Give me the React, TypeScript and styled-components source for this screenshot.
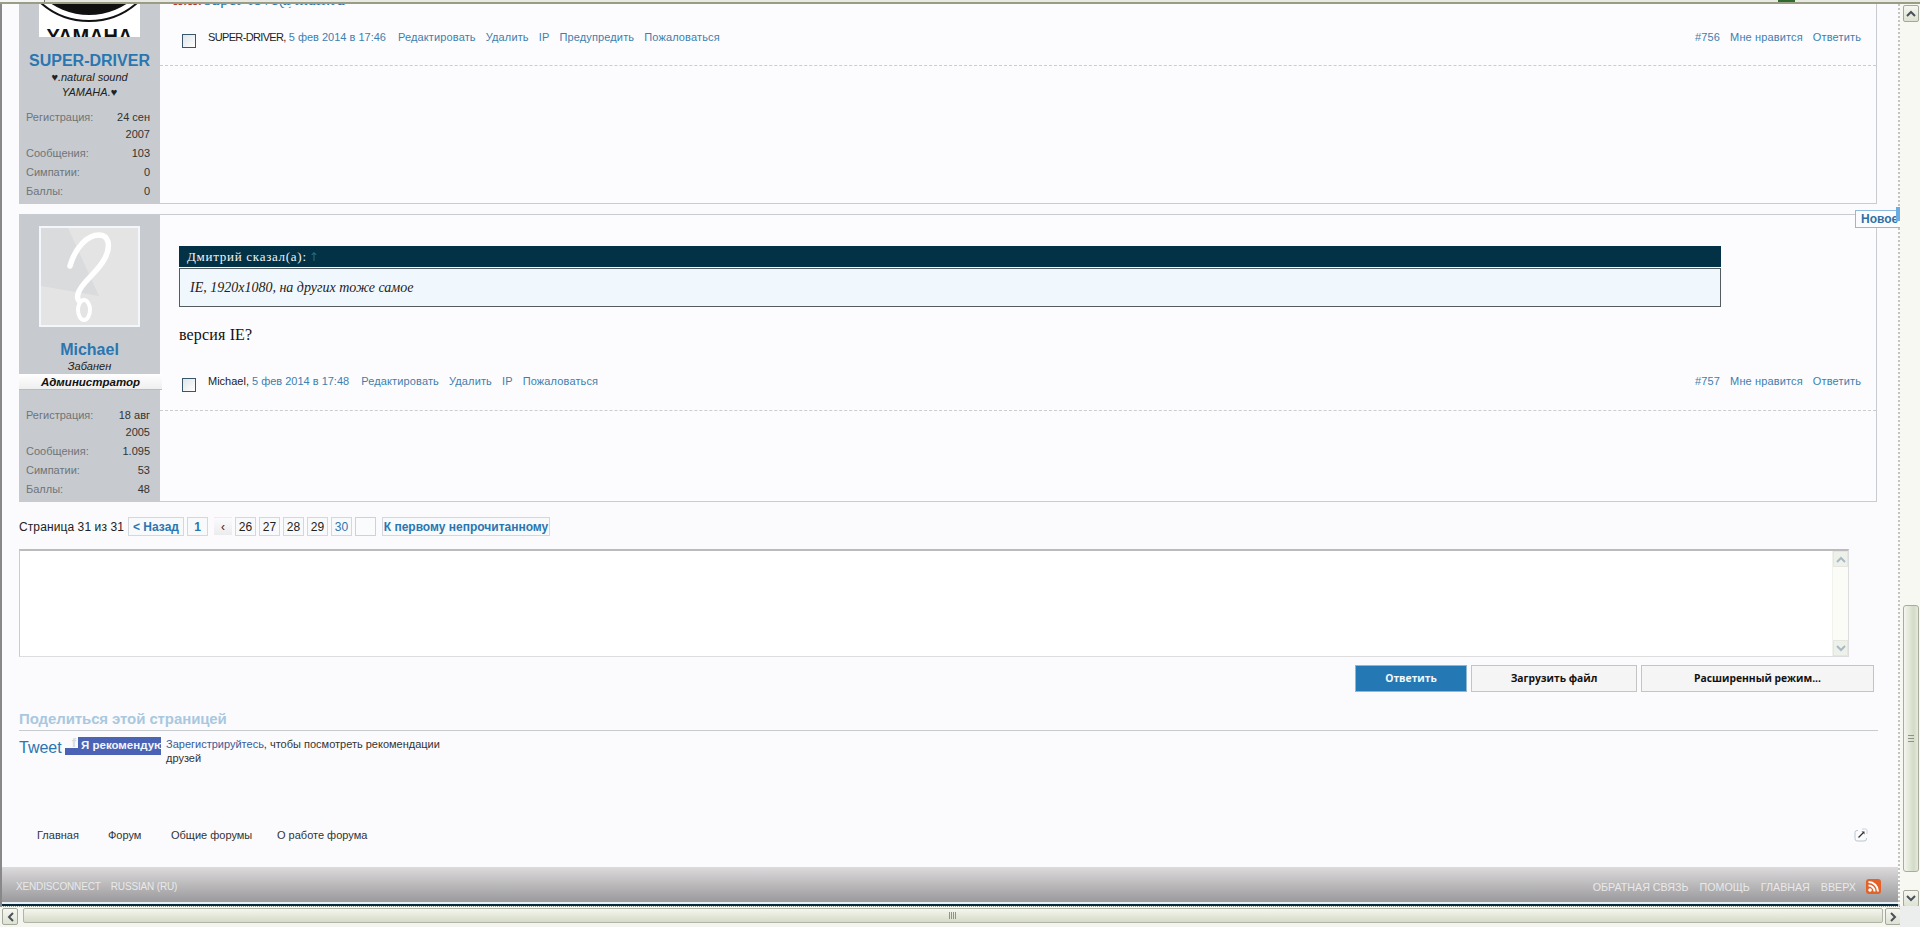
import React from "react";
import styled, { createGlobalStyle } from "styled-components";

const Global = createGlobalStyle`
  html, body { margin: 0; padding: 0; height: 927px; overflow: hidden; background: #fbfbfd; }
  * { box-sizing: border-box; }
  body { font-family: "Liberation Sans", Arial, sans-serif; font-size: 11px; color: #222; }
`;

const Win = styled.div`
  width: 1920px; height: 927px; display: grid;
  grid-template-columns: 1900px 20px; grid-template-rows: 4px 902px 21px;
  background: #fbfbfd; position: relative; overflow: hidden;
`;
const TopStrip = styled.div`
  grid-column: 1 / 3; background: #e9e9e3; border-bottom: 2px solid #9a9c84;
  display: flex;
`;
const TopTab = styled.div`
  width: 45px; height: 2px; background: #f4f5f7; border-right: 1px solid #777;
`;
const TopGreen = styled.div`
  width: 17px; height: 2px; margin-right: 125px; background: #2f6b2f;
`;
const Main = styled.div`
  overflow: hidden; border-left: 2px solid #888; display: flex; flex-direction: column; position: relative;
  border-right: 2px dotted #c4c4be;
`;
const Content = styled.div`
  padding: 0 21px 0 17px; display: flex; flex-direction: column; height: 858px; margin-top: -1px; flex: none;
`;
const Post = styled.article<{ $h: number; $clip?: boolean }>`
  display: grid; grid-template-columns: 141px 1fr; height: ${(p) => p.$h}px; flex: none;
  border: 1px solid #c8ccd0; border-left: 0; ${(p) => p.$clip && "border-top: 0;"}
  width: 1858px; background: #fcfcfe; margin-bottom: 10px;
`;
const Side = styled.aside<{ $pad: number }>`
  background: #c7cbcf; display: flex; flex-direction: column; align-items: center;
  padding-top: ${(p) => p.$pad}px; height: calc(100% + 1px); position: relative;
`;
const AvatarClip = styled.div`
  width: 101px; height: 34px; background: #fff; overflow: hidden; flex: none;
  position: relative; text-align: center;
`;
const YamahaMark = styled.svg`
  position: absolute; left: 0; top: 0; width: 101px; height: 34px;
`;
const YamahaText = styled.span`
  position: absolute; left: 0; right: 0; top: 23px; font: bold 20px/20px "Liberation Sans", sans-serif; color: #111;
`;
const AvatarBox = styled.svg`
  width: 101px; height: 101px; flex: none; display: block;
`;
const Name = styled.a<{ $mt: number }>`
  font: bold 16px/18px "Liberation Sans", sans-serif; color: #2a76b0; margin-top: ${(p) => p.$mt}px; text-align: center;
`;
const Motto = styled.div`
  font: italic 11px/15px "Liberation Sans", sans-serif; color: #222; text-align: center; width: 110px;
`;
const Role = styled.div`
  align-self: stretch; margin-right: -2px; height: 16px;
  background: linear-gradient(#ffffff, #efefef); border-bottom: 1px solid #bbb; position: relative; z-index: 1;
  font: italic bold 11.5px/16px "Liberation Sans", sans-serif; color: #111; text-align: center;
`;
const Stats = styled.dl<{ $mt: number }>`
  margin: ${(p) => p.$mt}px 0 0; width: 100%; padding: 0 10px 0 7px; display: grid;
  grid-template-columns: 1fr auto; row-gap: 2px; font: 11px/17px "Liberation Sans", sans-serif;
`;
const StatLabel = styled.dt`
  color: #6f7478;
`;
const StatValue = styled.dd`
  margin: 0; color: #333; text-align: right; max-width: 48px;
`;
const Body = styled.div`
  display: flex; flex-direction: column; min-width: 0;
`;
const Clipped = styled.div`
  height: 5px; margin: 0 0 0 13px; overflow: hidden; font: 17px/17px "Liberation Serif", serif; color: #2a76b0;
  display: flex; align-items: flex-end; white-space: nowrap; letter-spacing: 0.3px;
`;
const ClippedRed = styled.span`
  color: #b33a2b; font-weight: bold; margin-right: 2px;
`;
const Quote = styled.div`
  margin: 31px 0 0 19px; width: 1542px; flex: none;
`;
const QuoteHead = styled.div`
  height: 21px; background: #033145; color: #f2f5f7; padding-left: 8px;
  font: 13px/21px "Liberation Serif", serif; letter-spacing: 0.72px;
`;
const QuoteArrow = styled.span`
  color: #1f6a96; margin-left: 2px; font: 12px/21px "DejaVu Sans", sans-serif;
`;
const QuoteBody = styled.div`
  margin-top: 1px; height: 39px; border: 1px solid #555c60; background: #f1f8fd; padding-left: 10px;
  font: italic 14px/37px "Liberation Serif", serif; color: #222;
`;
const Msg = styled.p`
  margin: 19px 0 0 19px; font: 16px/18px "Liberation Serif", serif; color: #111; letter-spacing: 0.15px;
`;
const Meta = styled.div<{ $mt: number; $h: number }>`
  display: flex; align-items: flex-start; padding: 0 15px 0 22px; margin-top: ${(p) => p.$mt}px; height: ${(p) => p.$h}px; flex: none;
  font: 11px/14px "Liberation Sans", sans-serif;
`;
const Check = styled.span`
  width: 14px; height: 14px; flex: none; border: 1.5px solid #39566b; background: linear-gradient(135deg, #dfe5e8, #fff);
  margin: 4px 12px 0 0;
`;
const Author = styled.span<{ $squeeze: number }>`
  color: #222; margin-right: 3px; letter-spacing: ${(p) => p.$squeeze}px;
`;
const MetaLink = styled.a`
  color: #3d7fae; margin-left: 10px; white-space: nowrap; letter-spacing: 0.14px;
`;
const MetaDate = styled.a`
  color: #3d7fae; white-space: nowrap; margin-right: 2px;
`;
const Spacer = styled.span`
  flex: 1;
`;
const Dashed = styled.div`
  border-top: 1px dashed #c9cdd0; flex: none;
`;
const Pager = styled.nav`
  display: flex; align-items: flex-start; margin-top: 5px; height: 20px; font: 12px/18px "Liberation Sans", sans-serif; flex: none;
`;
const PagerLabel = styled.span`
  color: #222; width: 109px; letter-spacing: 0.1px; line-height: 20px;
`;
const PageBtn = styled.a<{ $w: number; $ml?: number; $dark?: boolean; $bold?: boolean; $ghost?: boolean }>`
  width: ${(p) => p.$w}px; height: 19px; margin-left: ${(p) => p.$ml ?? 3}px; flex: none; display: block; text-align: center;
  border: 1px solid ${(p) => (p.$ghost ? "transparent" : "#d2d8de")};
  background: ${(p) => (p.$ghost ? "linear-gradient(#fbfbfd, #ececee)" : "#f8f9fb")};
  color: ${(p) => (p.$dark ? "#222" : "#2a76b0")};
  font-weight: ${(p) => (p.$bold ? 700 : 400)};
  white-space: nowrap; overflow: hidden;
`;
const BlankPage = styled.span`
  width: 21px; height: 19px; margin-left: 3px; flex: none; border: 1px solid #bcd7ec; background: #f9fbfd;
`;
const Editor = styled.div`
  margin-top: 12px; width: 1830px; height: 108px; background: #fff; flex: none;
  border: 1px solid #ddd; border-top: 2px solid #bbb; border-left: 1px solid #ccc;
  display: flex; justify-content: flex-end;
`;
const EditorScroll = styled.div`
  width: 16px; height: 100%; background: #fbfcf8; display: flex; flex-direction: column; justify-content: space-between;
  border-left: 1px solid #f0f2ec;
`;
const EditorBtn = styled.div`
  height: 16px; background: #eef1ea; border: 1px solid #e4e7e0; color: #a9b9c4; display: flex; align-items: center; justify-content: center;
`;
const Actions = styled.div`
  display: flex; justify-content: flex-end; gap: 4px; margin-top: 8px; padding-right: 3px; flex: none;
`;
const Btn = styled.button<{ $w: number; $primary?: boolean }>`
  width: ${(p) => p.$w}px; height: 27px; padding: 0;
  border: 1px solid ${(p) => (p.$primary ? "#8fb6d3" : "#c4c4c4")};
  background: ${(p) => (p.$primary ? "#2478b4" : "#f5f5f5")};
  color: ${(p) => (p.$primary ? "#f3f8fb" : "#111")};
  font: bold 10.3px/25px "Open Sans", sans-serif;
`;
const ShareTitle = styled.h3`
  margin: 18px 0 0; font: bold 15px/18px "Liberation Sans", sans-serif; letter-spacing: -0.1px; color: #a9c8df; flex: none; padding-bottom: 2px;
  border-bottom: 1px solid #c8cbce; width: 1859px; height: 21px;
`;
const ShareRow = styled.div`
  display: flex; align-items: flex-start; margin-top: 6px; height: 34px; flex: none;
`;
const Tweet = styled.a`
  font: 16px/21px "Liberation Sans", sans-serif; color: #2a76b0; width: 46px;
`;
const Like = styled.div`
  width: 96px; height: 18px; flex: none; display: flex;
  background: linear-gradient(#fbfbfd 0 11px, #4a63b4 11px);
`;
const LikeF = styled.span`
  width: 13px; font: bold 13px/12px "Liberation Sans", sans-serif; color: #d9dce0; text-align: right; padding-right: 2px;
`;
const LikeText = styled.span`
  background: #4a63b4; color: #f4f6fb; flex: 1; overflow: hidden; white-space: nowrap; padding-left: 3px;
  font: bold 11.5px/16px "Liberation Sans", sans-serif;
`;
const ShareNote = styled.div`
  margin-left: 5px; width: 300px; font: 11px/14px "Liberation Sans", sans-serif; color: #333;
`;
const ShareLink = styled.a`
  color: #3a5a98;
`;
const Crumbs = styled.div`
  display: flex; align-items: center; margin-top: 47px; height: 34px; flex: none; padding-left: 18px;
  font: 11px/14px "Liberation Sans", sans-serif; color: #333;
`;
const Crumb = styled.a<{ $w: number }>`
  width: ${(p) => p.$w}px; flex: none;
`;
const ExtIcon = styled.svg`
  margin-left: auto; margin-right: 9px; width: 14px; height: 14px; flex: none;
`;
const FootBar = styled.footer`
  margin-top: 6px; height: 35px; flex: none;
  background: linear-gradient(#dcdadb, #9a999b);
  display: flex; align-items: center; padding: 4px 17px 0 14px;
  font: 10.7px/14px "Liberation Sans", sans-serif; color: #e9e9e9;
`;
const FootLink = styled.a<{ $ml: number; $small?: boolean }>`
  margin-left: ${(p) => p.$ml}px; white-space: nowrap; ${(p) => p.$small && "font-size: 10px; letter-spacing: -0.15px;"}
`;
const Rss = styled.svg`
  width: 15px; height: 15px; margin-left: 10px; flex: none;
`;
const Edge = styled.div`
  height: 2px; flex: none; background: #e8f2f6;
`;
const DarkEdge = styled.div`
  height: 2px; flex: none; background: #06293c;
`;
const VBar = styled.div`
  display: flex; flex-direction: column; align-items: center; background: #f7f8f2; padding: 1px 0 0 2px;
`;
const ArrowBtn = styled.div<{ $w?: number; $h?: number }>`
  width: ${(p) => p.$w ?? 16}px; height: ${(p) => p.$h ?? 17}px; flex: none; border: 1px solid #a3a79c; border-radius: 2px;
  background: linear-gradient(#f6f7f0, #dde2d2); color: #4a5058; display: flex; align-items: center; justify-content: center;
`;
const VThumb = styled.div`
  margin-top: 583px; width: 16px; height: 267px; flex: none; border: 1px solid #a8ac9f; border-radius: 3px;
  background: linear-gradient(90deg, #f4f6ee, #d3dbc6 70%, #e6eadc);
  display: flex; align-items: center; justify-content: center;
`;
const VDown = styled.div`
  margin-top: 18px; flex: none;
`;
const Grip = styled.svg`
  display: block;
`;
const HBar = styled.div`
  display: flex; align-items: flex-start; padding: 1px 0 0 2px; background: #f4f5ee; height: 21px;
  border-top: 1px dotted #8f979a;
`;
const HThumb = styled.div`
  margin-left: 5px; width: 1860px; height: 15px; flex: none; border: 1px solid #b1b4a7; border-radius: 2px;
  background: linear-gradient(#f4f6ee, #d6dbc8); display: flex; align-items: center; justify-content: center;
`;
const HRight = styled.div`
  margin-left: 2px;
`;
const Corner = styled.div`
  background: #eceded;
`;
const NewTag = styled.div`
  position: absolute; left: 1855px; top: 210px; width: 45px; height: 18px; border: 1px solid #8cbbdf; border-right: 0;
  background: #fcfcfe; color: #2f70a5; font: bold 12px/16px "Liberation Sans", sans-serif; padding-left: 5px; overflow: hidden; z-index: 2;
`;
const NewCorner = styled.div`
  position: absolute; left: 1896px; top: 207px; width: 4px; height: 14px; background: #6aade3; z-index: 3;
`;

const Up = () => (
  <svg width="10" height="7" viewBox="0 0 10 7"><path d="M1 6 5 2l4 4" fill="none" stroke="currentColor" strokeWidth="2" /></svg>
);
const Down = () => (
  <svg width="10" height="7" viewBox="0 0 10 7"><path d="M1 1l4 4 4-4" fill="none" stroke="currentColor" strokeWidth="2" /></svg>
);
const Left = () => (
  <svg width="7" height="10" viewBox="0 0 7 10"><path d="M6 1 2 5l4 4" fill="none" stroke="currentColor" strokeWidth="2" /></svg>
);
const Right = () => (
  <svg width="7" height="10" viewBox="0 0 7 10"><path d="M1 1l4 4-4 4" fill="none" stroke="currentColor" strokeWidth="2" /></svg>
);

const PostMeta = ({ mt, h, author, squeeze, date, links, num }: { mt: number; h: number; author: string; squeeze: number; date: string; links: string[]; num: string }) => (
  <Meta $mt={mt} $h={h}>
    <Check />
    <Author $squeeze={squeeze}>{author},</Author>
    <MetaDate>{date}</MetaDate>
    {links.map((l) => (
      <MetaLink key={l}>{l}</MetaLink>
    ))}
    <Spacer />
    <MetaLink>{num}</MetaLink>
    <MetaLink>Мне нравится</MetaLink>
    <MetaLink>Ответить</MetaLink>
  </Meta>
);

const StatList = ({ mt, rows }: { mt: number; rows: [string, string][] }) => (
  <Stats $mt={mt}>
    {rows.map(([a, b]) => (
      <React.Fragment key={a}>
        <StatLabel>{a}</StatLabel>
        <StatValue>{b}</StatValue>
      </React.Fragment>
    ))}
  </Stats>
);

export default function App() {
  return (
    <Win>
      <Global />
      <TopStrip>
        <TopTab />
        <Spacer />
        <TopGreen />
      </TopStrip>
      <Main>
        <Content>
          <Post $h={201} $clip>
            <Side $pad={0}>
              <AvatarClip>
                <YamahaMark viewBox="0 0 101 34">
                  <circle cx="50" cy="-55" r="73" fill="#fff" stroke="#111" strokeWidth="2" />
                  <circle cx="50" cy="-57" r="69" fill="#111" />
                </YamahaMark>
                <YamahaText>YAMAHA</YamahaText>
              </AvatarClip>
              <Name $mt={15}>SUPER-DRIVER</Name>
              <Motto>♥.natural sound YAMAHA.♥</Motto>
              <StatList
                mt={9}
                rows={[
                  ["Регистрация:", "24 сен 2007"],
                  ["Сообщения:", "103"],
                  ["Симпатии:", "0"],
                  ["Баллы:", "0"],
                ]}
              />
            </Side>
            <Body>
              <Clipped>
                <ClippedRed>п.п.</ClippedRed>super-love@mail.ru
              </Clipped>
              <PostMeta
                mt={22}
                h={35}
                author="SUPER-DRIVER"
                squeeze={-0.65}
                date="5 фев 2014 в 17:46"
                links={["Редактировать", "Удалить", "IP", "Предупредить", "Пожаловаться"]}
                num="#756"
              />
              <Dashed />
            </Body>
          </Post>
          <Post $h={288}>
            <Side $pad={11}>
              <AvatarBox viewBox="0 0 101 101">
                <rect x="1" y="1" width="99" height="99" fill="#dadbdd" stroke="#f3f7fb" strokeWidth="2" />
                <polygon points="29,2 99,2 99,99 2,99 2,60 60,70" fill="#e4e4e5" />
                <path d="M31 40C36 22 48 9 60 9 70 9 72 20 66 32 58 48 42 56 39 68 38 72 39 74 40 75" fill="none" stroke="#fff" strokeWidth="5.5" strokeLinecap="round" />
                <ellipse cx="45" cy="84" rx="6" ry="10" fill="none" stroke="#fff" strokeWidth="4" />
              </AvatarBox>
              <Name $mt={14}>Michael</Name>
              <Motto>Забанен</Motto>
              <Role>Администратор</Role>
              <StatList
                mt={17}
                rows={[
                  ["Регистрация:", "18 авг 2005"],
                  ["Сообщения:", "1.095"],
                  ["Симпатии:", "53"],
                  ["Баллы:", "48"],
                ]}
              />
            </Side>
            <Body>
              <Quote>
                <QuoteHead>
                  Дмитрий сказал(а):<QuoteArrow>↑</QuoteArrow>
                </QuoteHead>
                <QuoteBody>IE, 1920x1080, на других тоже самое</QuoteBody>
              </Quote>
              <Msg>версия IE?</Msg>
              <PostMeta
                mt={30}
                h={36}
                author="Michael"
                squeeze={0}
                date="5 фев 2014 в 17:48"
                links={["Редактировать", "Удалить", "IP", "Пожаловаться"]}
                num="#757"
              />
              <Dashed />
            </Body>
          </Post>
          <Pager>
            <PagerLabel>Страница 31 из 31</PagerLabel>
            <PageBtn $w={56} $ml={0} $bold>&lt; Назад</PageBtn>
            <PageBtn $w={21} $bold>1</PageBtn>
            <PageBtn $w={18} $ml={6} $ghost $dark>‹</PageBtn>
            <PageBtn $w={21} $dark>26</PageBtn>
            <PageBtn $w={21} $dark>27</PageBtn>
            <PageBtn $w={21} $dark>28</PageBtn>
            <PageBtn $w={21} $dark>29</PageBtn>
            <PageBtn $w={21}>30</PageBtn>
            <BlankPage />
            <PageBtn $w={168} $ml={6} $bold>К первому непрочитанному</PageBtn>
          </Pager>
          <Editor>
            <EditorScroll>
              <EditorBtn><Up /></EditorBtn>
              <EditorBtn><Down /></EditorBtn>
            </EditorScroll>
          </Editor>
          <Actions>
            <Btn $w={112} $primary>Ответить</Btn>
            <Btn $w={166}>Загрузить файл</Btn>
            <Btn $w={233}>Расширенный режим...</Btn>
          </Actions>
          <ShareTitle>Поделиться этой страницей</ShareTitle>
          <ShareRow>
            <Tweet>Tweet</Tweet>
            <Like>
              <LikeF>f</LikeF>
              <LikeText>Я рекомендую</LikeText>
            </Like>
            <ShareNote>
              <ShareLink>Зарегистрируйтесь</ShareLink>, чтобы посмотреть рекомендации друзей
            </ShareNote>
          </ShareRow>
          <Crumbs>
            <Crumb $w={71}>Главная</Crumb>
            <Crumb $w={63}>Форум</Crumb>
            <Crumb $w={106}>Общие форумы</Crumb>
            <Crumb $w={110}>О работе форума</Crumb>
            <ExtIcon viewBox="0 0 14 14">
              <path d="M4 2.500H3Q1 2.500 1 4.500v6Q1 13 3 13h7q2.500 0 2.500-2V10" fill="none" stroke="#b7c6d1" />
              <path d="M8 1h3.500Q13 1 13 2.500V6" fill="none" stroke="#c6d2db" />
              <path d="M4.500 9.500 9 5" stroke="#333" strokeWidth="1.200" />
              <polygon points="7.500,3.500 10.500,3.500 10.500,6.500" fill="#333" />
            </ExtIcon>
          </Crumbs>
        </Content>
        <FootBar>
          <FootLink $ml={0} $small>XENDISCONNECT</FootLink>
          <FootLink $ml={10} $small>RUSSIAN (RU)</FootLink>
          <Spacer />
          <FootLink $ml={0}>ОБРАТНАЯ СВЯЗЬ</FootLink>
          <FootLink $ml={11}>ПОМОЩЬ</FootLink>
          <FootLink $ml={11}>ГЛАВНАЯ</FootLink>
          <FootLink $ml={11}>ВВЕРХ</FootLink>
          <Rss viewBox="0 0 15 15">
            <rect width="15" height="15" rx="3" fill="#e2622a" />
            <circle cx="4" cy="11" r="1.800" fill="#fff" />
            <path d="M2.500 6.500a6 6 0 0 1 6 6M2.500 3a9.500 9.500 0 0 1 9.500 9.500" fill="none" stroke="#fff" strokeWidth="2" />
          </Rss>
        </FootBar>
        <Edge />
        <DarkEdge />
      </Main>
      <VBar>
        <ArrowBtn><Up /></ArrowBtn>
        <VThumb>
          <Grip width="6" height="7"><path d="M0 .5h6M0 3.500h6M0 6.500h6" stroke="#8d9388" /></Grip>
        </VThumb>
        <VDown>
          <ArrowBtn><Down /></ArrowBtn>
        </VDown>
      </VBar>
      <HBar>
        <ArrowBtn $w={16} $h={17}><Left /></ArrowBtn>
        <HThumb>
          <Grip width="8" height="7"><path d="M.5 0v7M2.500 0v7M4.500 0v7M6.500 0v7" stroke="#8d9388" /></Grip>
        </HThumb>
        <HRight>
          <ArrowBtn $w={16} $h={17}><Right /></ArrowBtn>
        </HRight>
      </HBar>
      <Corner />
      <NewTag>Новое</NewTag>
      <NewCorner />
    </Win>
  );
}
